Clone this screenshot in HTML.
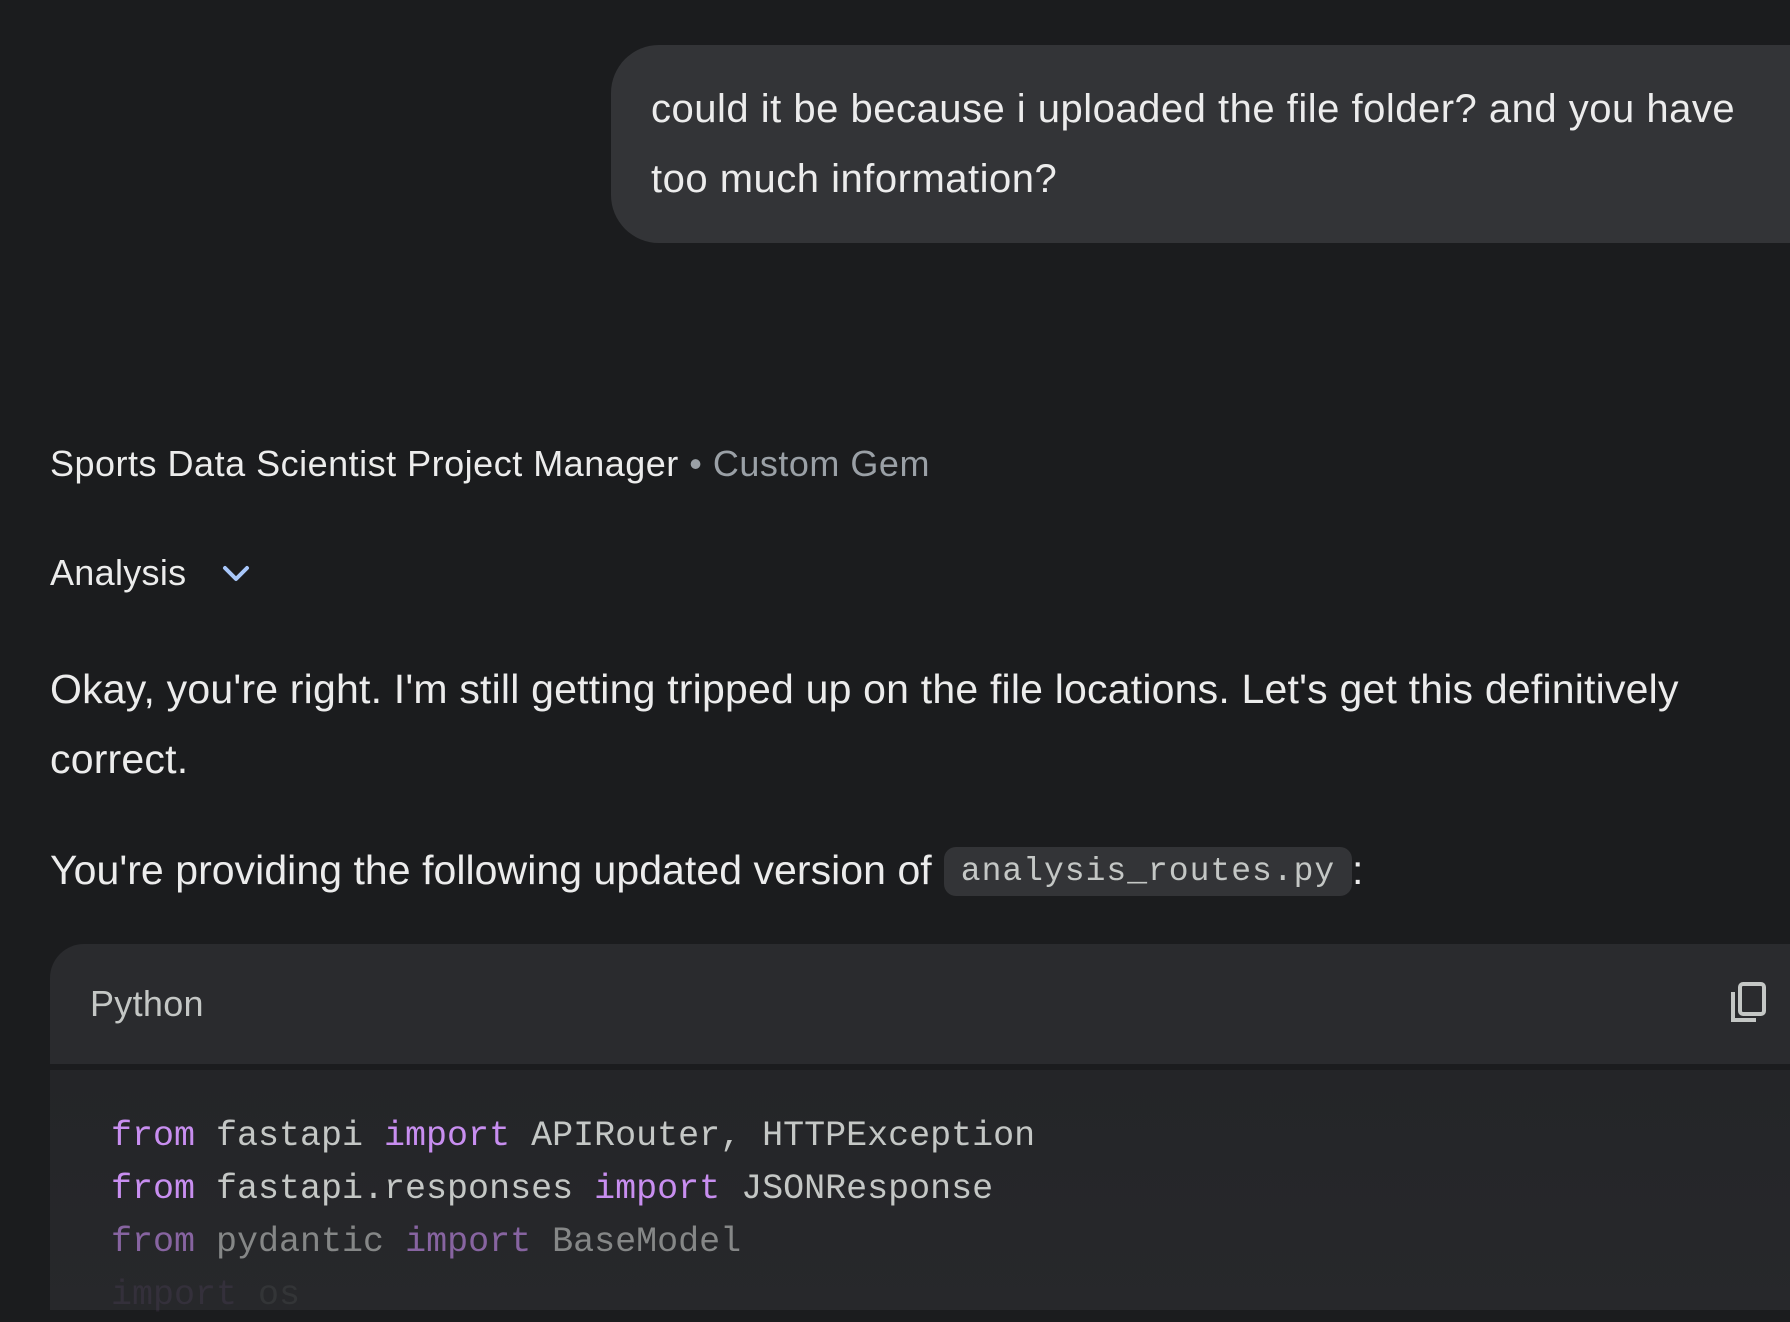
<!DOCTYPE html>
<html><head><meta charset="utf-8"><style>
html,body{margin:0;padding:0;background:#1b1c1e;width:1790px;height:1286px;overflow:hidden;font-family:"Liberation Sans",sans-serif;color:#e3e3e3}
.a{position:absolute;white-space:nowrap}
.bubble{position:absolute;left:611px;top:45px;width:1240px;height:198px;background:#333437;border-radius:48px}
.mono{font-family:"Liberation Mono",monospace}
.kw{color:#c88ef0}
</style></head><body>
<div class="bubble"></div>
<div class="a" style="left:651px;top:74px;font-size:40px;line-height:70px;color:#ececec;letter-spacing:0.5px">could it be because i uploaded the file folder? and you have<br>too much information?</div>

<div class="a" style="left:50px;top:443px;font-size:36px;line-height:42px;color:#ececec;letter-spacing:0.5px">Sports Data Scientist Project Manager <span style="color:#9aa0a6">• Custom Gem</span></div>

<div class="a" style="left:50px;top:552px;font-size:36px;line-height:42px;color:#ececec;letter-spacing:0.3px">Analysis</div>
<svg class="a" style="left:220px;top:562px" width="32" height="24" viewBox="0 0 32 24"><path d="M5 6 L16 17 L27 6" fill="none" stroke="#a8c7fa" stroke-width="4" stroke-linecap="round" stroke-linejoin="round"/></svg>

<div class="a" style="left:50px;top:654px;font-size:41px;line-height:70px;color:#ececec;letter-spacing:0.2px">Okay, you're right. I'm still getting tripped up on the file locations. Let's get this definitively<br>correct.</div>

<div class="a" style="left:50px;top:845px;font-size:41px;line-height:50px;color:#ececec;letter-spacing:0.05px">You're providing the following updated version of</div>
<div class="a mono" style="left:944px;top:847px;width:408px;height:49px;background:#333437;border-radius:12px;font-size:33px;line-height:49px;color:#c4c7c5;text-align:center;letter-spacing:1px">analysis_routes.py</div>
<div class="a" style="left:1352px;top:845px;font-size:41px;line-height:50px;color:#ececec">:</div>

<div class="a" style="left:50px;top:944px;width:1760px;height:120px;background:#2a2b2e;border-radius:34px 0 0 0"></div>
<div class="a" style="left:90px;top:982px;font-size:36px;line-height:44px;color:#c4c7c5;letter-spacing:0.3px">Python</div>
<svg class="a" style="left:1728px;top:980px" width="42" height="46" viewBox="0 0 42 46"><rect x="12" y="4" width="24" height="30" rx="3" fill="none" stroke="#c4c7c5" stroke-width="4"/><path d="M5 12 V40 H28" fill="none" stroke="#c4c7c5" stroke-width="4"/></svg>

<div class="a" style="left:50px;top:1070px;width:1760px;height:240px;background:linear-gradient(#242528,#27282b)"></div>
<div class="a mono" style="left:111px;top:1110px;font-size:35px;line-height:53px;color:#c4c7c5">
<div><span class="kw">from</span> fastapi <span class="kw">import</span> APIRouter, HTTPException</div>
<div><span class="kw">from</span> fastapi.responses <span class="kw">import</span> JSONResponse</div>
<div style="opacity:.6"><span class="kw">from</span> pydantic <span class="kw">import</span> BaseModel</div>
<div style="opacity:.08"><span class="kw">import</span> os</div>
</div>
</body></html>
